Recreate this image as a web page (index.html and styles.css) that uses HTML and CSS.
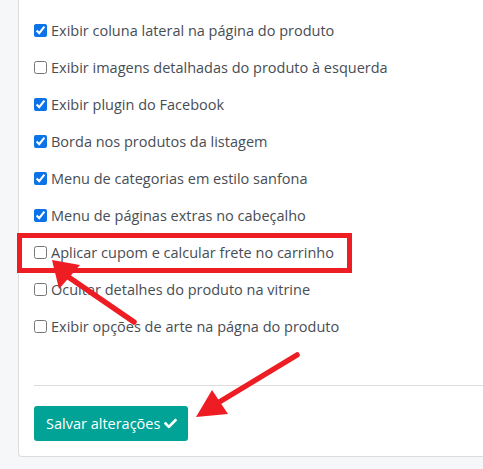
FILE: index.html
```html
<!DOCTYPE html>
<html lang="pt">
<head>
<meta charset="utf-8">
<link rel="stylesheet" href="styles.css">
</head>
<body>
<div class="page">
  <div class="card">
    <ul class="options">
      <li class="option"><label><input type="checkbox" checked> Exibir coluna lateral na página do produto</label></li>
      <li class="option"><label><input type="checkbox"> Exibir imagens detalhadas do produto à esquerda</label></li>
      <li class="option"><label><input type="checkbox" checked> Exibir plugin do Facebook</label></li>
      <li class="option"><label><input type="checkbox" checked> Borda nos produtos da listagem</label></li>
      <li class="option"><label><input type="checkbox" checked> Menu de categorias em estilo sanfona</label></li>
      <li class="option"><label><input type="checkbox" checked> Menu de páginas extras no cabeçalho</label></li>
      <li class="option"><label><input type="checkbox"> Aplicar cupom e calcular frete no carrinho</label></li>
      <li class="option"><label><input type="checkbox"> Ocultar detalhes do produto na vitrine</label></li>
      <li class="option"><label><input type="checkbox"> Exibir opções de arte na págna do produto</label></li>
    </ul>
    <hr class="divider">
    <button class="save" type="button">Salvar alterações
      <svg class="check" viewBox="0 0 512 512" width="15" height="13"><path fill="#fff" d="M173.9 439.4L7.5 273c-10-10-10-26.2 0-36.2l36.2-36.2c10-10 26.2-10 36.2 0L192 312.7 432.1 72.6c10-10 26.2-10 36.2 0l36.2 36.2c10 10 10 26.2 0 36.2L210.1 439.4c-10 10-26.2 10-36.2 0z"/></svg>
    </button>
  </div>
  <svg class="annotations" width="483" height="469" viewBox="0 0 483 469">
    <rect x="19.5" y="235.5" width="330" height="35" fill="none" stroke="#ee1d23" stroke-width="5"/>
    <line x1="64" y1="274" x2="134" y2="322" stroke="#ee1d23" stroke-width="5.5" stroke-linecap="round"/>
    <polygon points="52,260 80,265 59,289" fill="#ee1d23"/>
    <line x1="216" y1="404" x2="297" y2="355" stroke="#ee1d23" stroke-width="5.5" stroke-linecap="round"/>
    <polygon points="196,417 212,390 228,414" fill="#ee1d23"/>
  </svg>
</div>
</body>
</html>
```
FILE: styles.css
```css
html, body {
  margin: 0;
  padding: 0;
  background: #f6f7f9;
  overflow: hidden;
}
.page {
  position: relative;
  width: 483px;
  height: 469px;
  overflow: hidden;
  font-family: "Open Sans", "DejaVu Sans", sans-serif;
}
.card {
  margin-left: 18px;
  width: 500px;
  background: #fff;
  border: 1px solid #dcdcdc;
  border-top: 0;
  border-radius: 0 0 4px 4px;
  padding: 12px 0 15px 15px;
  box-sizing: border-box;
}
.options {
  list-style: none;
  margin: 0;
  padding: 0;
}
.option {
  height: 37px;
  display: flex;
  align-items: center;
}
.option label {
  display: flex;
  align-items: center;
  font-size: 14.5px;
  color: #484d54;
}
.option input {
  width: 13px;
  height: 13px;
  margin: 0 4px 0 0;
  accent-color: #0b72e7;
}
.divider {
  border: 0;
  border-top: 1px solid #dcdcdc;
  margin: 40px 0 20px 0;
}
.save {
  display: inline-flex;
  align-items: center;
  gap: 3px;
  height: 35px;
  padding: 0 10px 0 12px;
  background: #00a395;
  color: #fff;
  border: 0;
  border-radius: 3px;
  font-family: "Open Sans", "DejaVu Sans", sans-serif;
  font-size: 14.5px;
}
.check {
  display: block;
}
.annotations {
  position: absolute;
  left: 0;
  top: 0;
  pointer-events: none;
}
```
